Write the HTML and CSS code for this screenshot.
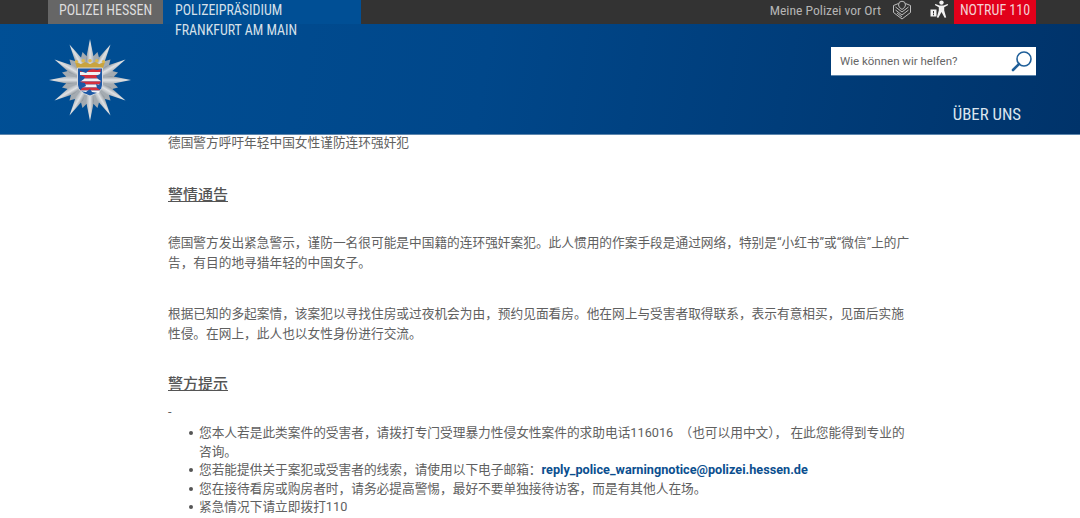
FILE: index.html
```html
<!DOCTYPE html>
<html lang="zh">
  <head>
    <meta charset="utf-8">
    <title>Polizei Hessen</title>
    <link rel="stylesheet" href="styles.css">
  </head>
  <body>
    <header class="site-header">
      <div class="top-bar">
        <div class="top-left">
          <a class="tab-hessen">POLIZEI HESSEN</a>
          <a class="tab-praesidium">POLIZEIPRÄSIDIUM<br>FRANKFURT AM MAIN</a>
        </div>
        <div class="top-right">
          <a class="vor-ort">Meine Polizei vor Ort</a>
          <svg class="icon-book" width="20" height="20" viewBox="0 0 20 20" fill="none" stroke="#bdbdbd" stroke-width="1">
            <path d="M6.5 3.5 L1.5 5.5 V12.5 L10 19 L18.5 12.5 V5.5 L13.5 3.5"/>
            <path d="M6.5 5 Q6.5 1.2 10 1.2 Q13.5 1.2 13.5 5 Q13.5 7.5 10 9.5 Q6.5 7.5 6.5 5 Z"/>
            <path d="M3.5 7 L10 12 L16.5 7 M3.5 10 L10 15 L16.5 10 M5 13 L10 17"/>
          </svg>
          <svg class="icon-access" width="19" height="18" viewBox="0 0 19 18" fill="#f2f2f2">
            <circle cx="11.5" cy="2.6" r="2.2"/>
            <path d="M4.8 5 L5.4 4 L9.5 5.4 H13.5 L17.6 4 L18.2 5 L14.2 7.2 V10.5 L16.2 17.5 L14.6 17.8 L11.5 12 L8.4 17.8 L6.8 17.5 L8.8 10.5 V7.2 Z"/>
            <path d="M0.5 9.5 H6.5 V16.5 H0.5 Z M3 11 V13.4 H4 V11 Z M3 14 V15.2 H4 V14 Z" fill-rule="evenodd"/>
          </svg>
          <a class="notruf">NOTRUF 110</a>
        </div>
      </div>
      <div class="main-bar">
        <svg class="badge" width="84" height="84" viewBox="0 0 84 84">
          <defs>
            <linearGradient id="ray-fill" x1="0" x2="1" y1="0" y2="0">
              <stop offset="0" stop-color="#8b939a"/>
              <stop offset="0.5" stop-color="#dfe2e5"/>
              <stop offset="1" stop-color="#a7aeb4"/>
            </linearGradient>
            <polygon id="ray" points="42,1 46,21 42,42 38,21" fill="url(#ray-fill)"/>
            <polygon id="fill-ray" points="42,13 50,27 42,42 34,27" fill="#a4abb1"/>
            <clipPath id="lion">
              <path d="M32 33 L38 35 L41 32 L45 31 L49 32 L53 31 L52 36 L48 38 L50 41 L53 43 L51 47 L48 46 L49 50 L52 52 L51 55 L44 54 L42 51 L38 54 L32 53 L34 50 L38 48 L37 45 L32 44 L36 41 L37 39 L32 37 Z"/>
            </clipPath>
          </defs>
          <circle cx="42" cy="42" r="24" fill="#aeb5ba"/>
          <use href="#fill-ray" transform="rotate(15 42 42)"/>
          <use href="#fill-ray" transform="rotate(45 42 42)"/>
          <use href="#fill-ray" transform="rotate(75 42 42)"/>
          <use href="#fill-ray" transform="rotate(105 42 42)"/>
          <use href="#fill-ray" transform="rotate(135 42 42)"/>
          <use href="#fill-ray" transform="rotate(165 42 42)"/>
          <use href="#fill-ray" transform="rotate(195 42 42)"/>
          <use href="#fill-ray" transform="rotate(225 42 42)"/>
          <use href="#fill-ray" transform="rotate(255 42 42)"/>
          <use href="#fill-ray" transform="rotate(285 42 42)"/>
          <use href="#fill-ray" transform="rotate(315 42 42)"/>
          <use href="#fill-ray" transform="rotate(345 42 42)"/>
          <use href="#ray"/>
          <use href="#ray" transform="rotate(30 42 42)"/>
          <use href="#ray" transform="rotate(60 42 42)"/>
          <use href="#ray" transform="rotate(90 42 42)"/>
          <use href="#ray" transform="rotate(120 42 42)"/>
          <use href="#ray" transform="rotate(150 42 42)"/>
          <use href="#ray" transform="rotate(180 42 42)"/>
          <use href="#ray" transform="rotate(210 42 42)"/>
          <use href="#ray" transform="rotate(240 42 42)"/>
          <use href="#ray" transform="rotate(270 42 42)"/>
          <use href="#ray" transform="rotate(300 42 42)"/>
          <use href="#ray" transform="rotate(330 42 42)"/>
          <path d="M27 24 L33 26 L37 24 L42 26 L47 24 L51 26 L57 24 L55 30 H29 Z" fill="#c9a43e"/>
          <g fill="#dcb94f">
            <circle cx="28.5" cy="23.5" r="1.6"/>
            <circle cx="35.2" cy="22.8" r="1.8"/>
            <circle cx="42" cy="22.8" r="1.8"/>
            <circle cx="48.8" cy="22.8" r="1.8"/>
            <circle cx="55.5" cy="23.5" r="1.6"/>
          </g>
          <path d="M29.5 30 H54.5 V47 Q54.5 54 42 58 Q29.5 54 29.5 47 Z" fill="#1c58a6" stroke="#d8dadc" stroke-width="1"/>
          <g clip-path="url(#lion)">
            <rect x="30" y="30" width="24" height="4" fill="#d5303e"/>
            <rect x="30" y="34" width="24" height="3" fill="#f2f2f4"/>
            <rect x="30" y="37" width="24" height="3.5" fill="#d5303e"/>
            <rect x="30" y="40.5" width="24" height="3" fill="#f2f2f4"/>
            <rect x="30" y="43.5" width="24" height="3" fill="#d5303e"/>
            <rect x="30" y="46.5" width="24" height="3" fill="#f2f2f4"/>
            <rect x="30" y="49.5" width="24" height="3" fill="#d5303e"/>
            <rect x="30" y="52.5" width="24" height="3" fill="#f2f2f4"/>
          </g>
        </svg>
        <div class="header-right">
          <form class="search">
            <span class="search-text">Wie können wir helfen?</span>
            <svg class="search-icon" width="22" height="22" viewBox="0 0 22 22" fill="none" stroke="#1f5f99">
              <circle cx="13" cy="9" r="7" stroke-width="1.6"/>
              <path d="M8 14 L2 20" stroke-width="2.6" stroke-linecap="round"/>
            </svg>
          </form>
          <a class="nav-link">ÜBER UNS</a>
        </div>
      </div>
    </header>

    <main class="content">
      <p class="intro">德国警方呼吁年轻中国女性谨防连环强奸犯</p>

      <h2 class="first">警情通告</h2>
      <p class="para-a">德国警方发出紧急警示，谨防一名很可能是中国籍的连环强奸案犯。此人惯用的作案手段是通过网络，特别是“小红书”或“微信”上的广告，有目的地寻猎年轻的中国女子。</p>
      <p class="para-b">根据已知的多起案情，该案犯以寻找住房或过夜机会为由，预约见面看房。他在网上与受害者取得联系，表示有意相买，见面后实施性侵。在网上，此人也以女性身份进行交流。</p>

      <h2 class="second">警方提示</h2>
      <p class="dash">-</p>
      <ul class="tips">
        <li>您本人若是此类案件的受害者，请拨打专门受理暴力性侵女性案件的求助电话116016 &nbsp;（也可以用中文）， 在此您能得到专业的咨询。</li>
        <li>您若能提供关于案犯或受害者的线索，请使用以下电子邮箱：<a class="mail">reply_police_warningnotice@polizei.hessen.de</a></li>
        <li>您在接待看房或购房者时，请务必提高警惕，最好不要单独接待访客，而是有其他人在场。</li>
        <li>紧急情况下请立即拨打110</li>
      </ul>
    </main>
  </body>
</html>
```

FILE: styles.css
```css
html, body {
  margin: 0;
  padding: 0;
  height: 518px;
  overflow: hidden;
}

body {
  background: #fff;
  font-family: Roboto, "Noto Sans CJK SC", sans-serif;
  color: #606060;
}

.site-header {
  background: linear-gradient(100deg, #004f95 0%, #00478a 45%, #00336a 100%);
  height: 135px;
  border-bottom: 1px solid #5d86ad;
  box-sizing: border-box;
}

.top-bar {
  height: 24px;
  background: #333;
  display: flex;
  justify-content: space-between;
  padding: 0 44px 0 48px;
  font-family: "Roboto Condensed", "Liberation Sans Narrow", Roboto, sans-serif;
}

.top-left {
  display: flex;
}

.tab-hessen {
  width: 115px;
  height: 24px;
  background: #666;
  color: #ddd;
  font-size: 14px;
  line-height: 21px;
  text-align: center;
}

.tab-praesidium {
  width: 186px;
  height: 23px;
  padding: 1px 0 0 12px;
  background: #004f95;
  color: #d5e0ea;
  font-size: 13.9px;
  line-height: 19.5px;
  white-space: nowrap;
}

.top-right {
  display: flex;
  align-items: flex-start;
}

.vor-ort {
  color: #b5b5b5;
  font-size: 13.6px;
  line-height: 20px;
  margin-right: 11px;
}

.icon-book {
  margin-top: 0;
  margin-right: 18px;
}

.icon-access {
  margin-top: 0;
  margin-right: 5px;
}

.notruf {
  width: 82px;
  height: 24px;
  background: #e2001a;
  color: #f4d0d4;
  font-size: 14px;
  line-height: 20px;
  text-align: center;
}

.main-bar {
  display: flex;
  justify-content: space-between;
  padding: 14px 44px 0 48px;
}

.badge {
  display: block;
}

.header-right {
  display: flex;
  flex-direction: column;
  align-items: flex-end;
  padding-top: 9px;
}

.search {
  width: 205px;
  height: 29px;
  margin: 0;
  background: #fff;
  border-bottom: 1px solid #5d86ad;
  display: flex;
  align-items: center;
  justify-content: space-between;
  padding: 0 3px 0 9px;
  box-sizing: border-box;
}

.search-text {
  font-size: 11.5px;
  color: #666;
}

.nav-link {
  margin-top: 27px;
  margin-right: 15px;
  color: #dbe5ee;
  font-family: "Roboto Condensed", "Liberation Sans Narrow", Roboto, sans-serif;
  font-size: 16.8px;
  line-height: 22px;
}

.content {
  width: 745px;
  margin-left: 168px;
  font-size: 12.7px;
  line-height: 20px;
}

p {
  margin: 0;
}

.intro {
  margin-top: -2px;
}

h2 {
  margin: 0;
  font-size: 15px;
  font-weight: 500;
  line-height: 20px;
  color: #555;
  text-decoration: underline;
}

.first {
  margin-top: 32px;
}

.para-a {
  margin-top: 28px;
}

.para-b {
  margin-top: 31px;
}

.second {
  margin-top: 30px;
}

.dash {
  margin-top: 8px;
}

.tips {
  margin: 2px 0 0;
  padding: 0 0 0 31px;
  line-height: 18.5px;
  list-style: none;
}

.tips li::before {
  content: "";
  display: inline-block;
  width: 4px;
  height: 4px;
  margin: 0 6px 2px -10px;
  border-radius: 50%;
  background: #555;
}

.mail {
  color: #0b4f8f;
  font-weight: 700;
}
```
